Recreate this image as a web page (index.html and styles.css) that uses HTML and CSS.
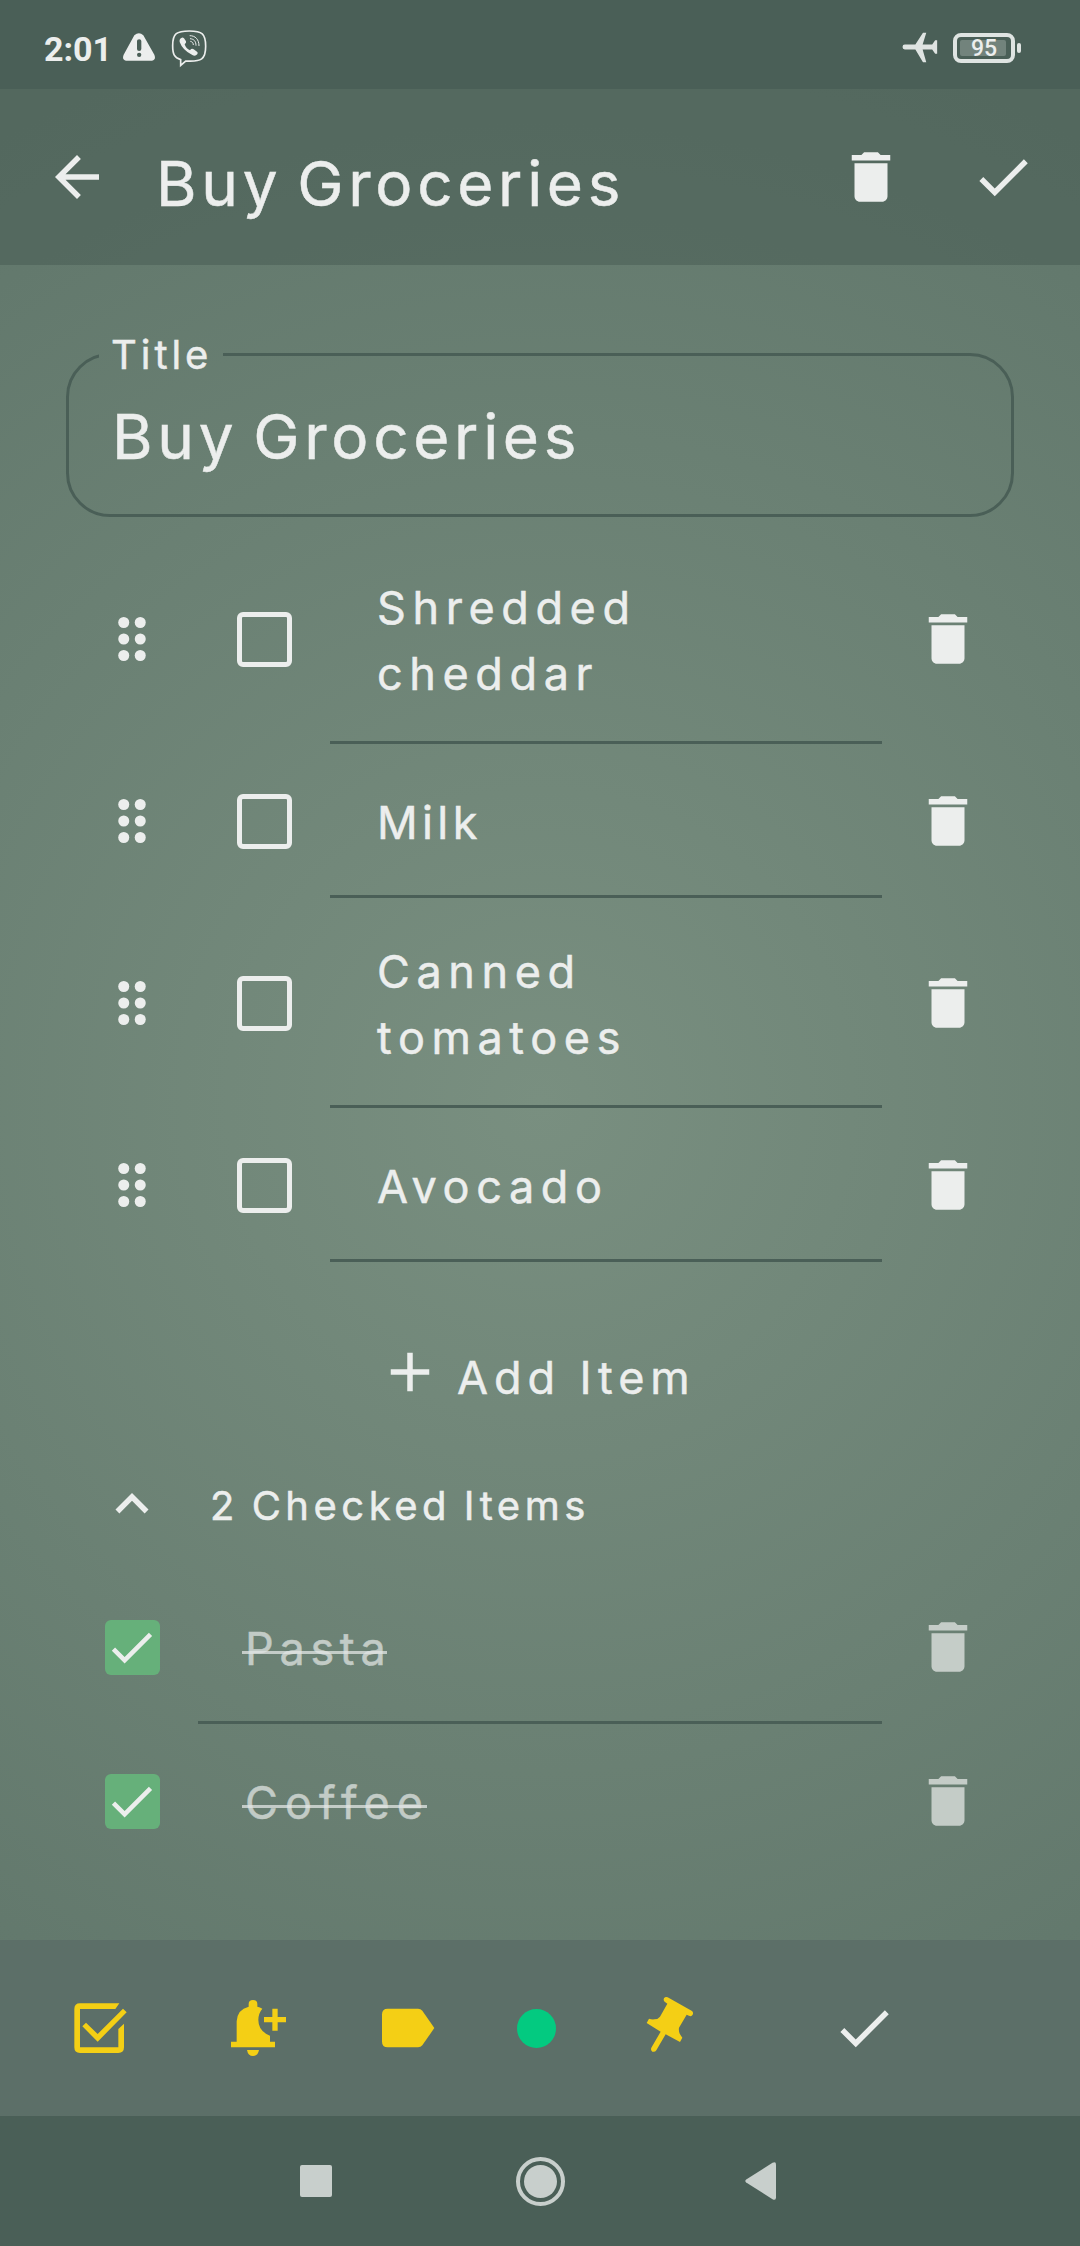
FILE: index.html
```html
<!DOCTYPE html>
<html lang="en">
<head>
<meta charset="utf-8">
<title>Buy Groceries</title>
<link rel="stylesheet" href="styles.css">
</head>
<body>
<svg class="sprite" width="0" height="0" aria-hidden="true">
  <symbol id="trash" viewBox="0 0 24 24"><path d="M6 19c0 1.1.9 2 2 2h8c1.1 0 2-.9 2-2V7H6v12zM19 4h-3.5l-1-1h-5l-1 1H5v2h14V4z"/></symbol>
  <symbol id="check" viewBox="0 0 24 24"><path d="M9 16.17L4.83 12l-1.42 1.41L9 19 21 7l-1.41-1.41z"/></symbol>
  <symbol id="grip" viewBox="0 0 24 24"><circle cx="9" cy="6" r="2"/><circle cx="15" cy="6" r="2"/><circle cx="9" cy="12" r="2"/><circle cx="15" cy="12" r="2"/><circle cx="9" cy="18" r="2"/><circle cx="15" cy="18" r="2"/></symbol>
</svg>
<div class="screen">
  <header class="status">
    <span class="clock">2:01</span>
    <svg class="warn" viewBox="369 97 99 90"><path fill-rule="evenodd" d="M403 104Q417 92 430 104L463 162Q469 177 456 180H378Q365 177 371 162ZM411 121V145Q411 151 417.500 151Q424 151 424 145V121Q424 116 417.500 116Q411 116 411 121ZM417.500 156A6.500 6.500 0 1 0 417.500 169A6.500 6.500 0 1 0 417.500 156Z"/></svg>
    <svg class="viber" viewBox="510 80 114 120"><path class="line" d="M568 89C530 89 518 96 518 133C518 158 523 169 542 175V192L557 179C605 182 617 174 617 135C617 97 606 89 568 89Z"/><path d="M540 113Q547 105 552 111L558 120Q560 124 554 129Q558 142 570 147Q575 140 581 144L591 151Q596 155 589 161Q584 165 577 161Q548 147 539 122Q538 117 540 113Z"/><path class="thin" d="M569 103C586 103 597 114 597 134M570 112C582 113 588 120 588 133M571 120C577 121 580 125 580 131"/></svg>
    <span class="spacer"></span>
    <svg class="plane" viewBox="545 94 108 94"><path d="M553 132H585L608 96H618L607 132H636L645 119H651V160H645L636 147H607L618 186H608L585 147H553Q546 147 546 139.500Q546 132 553 132Z"/></svg>
    <span class="battery"><span class="level">95</span></span><span class="nub"></span>
  </header>

  <div class="appbar">
    <svg class="icon" viewBox="0 0 24 24"><path d="M20 11H7.830l5.590-5.590L12 4l-8 8 8 8 1.410-1.410L7.830 13H20v-2z"/></svg>
    <h1>Buy Groceries</h1>
    <svg class="icon"><use href="#trash"/></svg>
    <svg class="icon done"><use href="#check"/></svg>
  </div>

  <main>
    <fieldset class="field">
      <legend>Title</legend>
      <div class="value">Buy Groceries</div>
    </fieldset>

    <div class="list">
      <div class="item">
        <svg class="icon"><use href="#grip"/></svg><span class="box"></span>
        <div class="text"><span class="name">Shredded cheddar</span></div>
        <svg class="icon"><use href="#trash"/></svg>
      </div>
      <div class="item">
        <svg class="icon"><use href="#grip"/></svg><span class="box"></span>
        <div class="text"><span class="name narrow">Milk</span></div>
        <svg class="icon"><use href="#trash"/></svg>
      </div>
      <div class="item">
        <svg class="icon"><use href="#grip"/></svg><span class="box"></span>
        <div class="text"><span class="name">Canned tomatoes</span></div>
        <svg class="icon"><use href="#trash"/></svg>
      </div>
      <div class="item">
        <svg class="icon"><use href="#grip"/></svg><span class="box"></span>
        <div class="text"><span class="name">Avocado</span></div>
        <svg class="icon"><use href="#trash"/></svg>
      </div>
    </div>

    <div class="add">
      <svg class="icon" viewBox="0 0 24 24"><path d="M19 13h-6v6h-2v-6H5v-2h6V5h2v6h6v2z"/></svg>
      <span>Add Item</span>
    </div>

    <div class="summary">
      <svg class="icon" viewBox="0 0 24 24"><path d="M12 8l-6 6 1.410 1.410L12 10.830l4.590 4.580L18 14z"/></svg>
      <span>2 Checked Items</span>
    </div>

    <div class="list">
      <div class="item checked">
        <span class="box on"><svg><use href="#check"/></svg></span>
        <div class="text"><span class="name">Pasta</span></div>
        <svg class="icon"><use href="#trash"/></svg>
      </div>
      <div class="item checked">
        <span class="box on"><svg><use href="#check"/></svg></span>
        <div class="text"><span class="name wide">Coffee</span></div>
        <svg class="icon"><use href="#trash"/></svg>
      </div>
    </div>
  </main>

  <div class="toolbar">
    <svg class="icon" viewBox="78 195 198 198"><path d="M238 220H120Q103 220 103 237V352Q103 369 120 369H235Q252 369 252 352V281L235 297V352H120V237H226ZM127 289L138 278L173 312L249 236L260 247L173 335Z"/></svg>
    <svg class="icon bell" viewBox="555 195 198 198"><path d="M626 230V222Q626 210 639 210Q652 210 652 222V230Q660 231 667 236Q655 250 655 270Q655 304 690 317V335H705V352H573V335H590V274Q592 238 626 230ZM621 360H657Q654 378 639 378Q624 378 621 360ZM697 236H713V261H738V277H713V302H697V277H672V261H697Z"/></svg>
    <svg class="icon tag" viewBox="1005 195 198 198"><path d="M1043 236H1134Q1142 236 1147 242L1183 294L1147 346Q1142 352 1134 352H1043Q1026 352 1026 335V253Q1026 236 1043 236Z"/></svg>
    <span class="dot"></span>
    <svg class="icon pin" viewBox="531 195 198 198"><path d="M623 202L696 243Q701 247 698 254Q694 261 687 257L680 254L657 293Q655 306 662 316L667 323L660 336L617 313L589 361Q585 367 577 365Q571 361 574 353L602 305L560 279L567 266Q575 269 583 268Q594 268 600 260L622 221L615 216Q609 211 612 205Q616 199 623 202Z"/></svg>
    <svg class="icon accept"><use href="#check"/></svg>
  </div>

  <nav class="nav">
    <span class="recent"></span>
    <span class="home"></span>
    <svg class="back" viewBox="0 0 31 38"><path d="M27.500 .8Q31 -.8 31 2.500V35.500Q31 38.800 27.500 37.200L1.200 20.600Q-.6 19 1.200 17.400Z"/></svg>
  </nav>
</div>
</body>
</html>
```
FILE: styles.css
```css
* { box-sizing: border-box; }
body { margin: 0; font-family: Inter, "Open Sans", sans-serif; color: #eceeed; }
.sprite { position: absolute; }
svg { display: block; fill: currentColor; flex: none; }
.icon { width: 66px; height: 66px; }

.screen {
  width: 1080px; height: 2246px; overflow: hidden;
  display: flex; flex-direction: column;
  background: radial-gradient(circle at 540px 1102px, #798f80 0, #63796d 980px, #5f7569 1230px);
}

.status { height: 89px; padding: 6px 59px 0 44px; display: flex; align-items: center; background: #4a5f57; }
.clock { font: 700 34px/40px Roboto, sans-serif; width: 79px; margin-top: 2px; }
.warn { width: 33px; height: 30px; }
.viber { width: 38px; height: 40px; margin-left: 14px; }
.viber .line { fill: none; stroke: currentColor; stroke-width: 5; }
.viber .thin { fill: none; stroke: currentColor; stroke-width: 3; }
.spacer { flex: 1; }
.plane { width: 36px; height: 31px; margin-right: 15px; color: #dfe4e2; }
.battery { width: 62px; height: 30px; border: 4px solid #dfe4e2; border-radius: 8px; padding: 3px; }
.level { display: block; width: 46px; height: 16px; border-radius: 2px; background: #72837c; font: 500 23px/17px Roboto, sans-serif; text-align: center; padding-left: 2px; }
.nub { width: 4px; height: 10px; margin-left: 2px; border-radius: 2px; background: #dfe4e2; }

.appbar { height: 176px; padding: 0 44px; display: flex; align-items: center; background: rgba(70, 90, 82, .5); }
h1, .value, legend, .name, .add span, .summary span { -webkit-text-stroke: .5px currentColor; }
h1, .value { font-size: 62px; line-height: 76px; font-weight: 400; letter-spacing: 4.7px; word-spacing: -7px; white-space: nowrap; }
h1 { flex: 1; margin: 0 0 0 46px; padding-top: 13px; }
.done { margin-left: 66px; }

main { height: 1675px; padding: 69px 66px 0; overflow: hidden; }
.field { width: 948px; height: 183px; margin: 0 0 17px; min-width: 0; padding: 24px 43px 0; border: 3px solid #4a5f57; border-radius: 44px; }
legend { margin-left: -13px; padding: 0 11px 0 12px; font-size: 40px; line-height: 41px; letter-spacing: 3.95px; }

.item { display: grid; grid-template-columns: 132px 132px 552px 132px; align-items: center; justify-items: center; }
.item.checked { grid-template-columns: 132px 684px 132px; }
.box { width: 55px; height: 55px; border: 5px solid #eceeed; border-radius: 6px; }
.box.on { border: 0; background: #66b07a; }
.box.on svg { width: 55px; height: 55px; margin-left: -1px; }
.text { justify-self: stretch; min-height: 154px; padding: 40.5px 44px 34.5px 47px; display: flex; align-items: center; border-bottom: 3px solid #4a5f57; }
.name { font-size: 45px; line-height: 66px; letter-spacing: 6.6px; }
.narrow { letter-spacing: 4.4px; }
.checked .text { padding-left: 44px; }
.checked:last-child .text { border-color: transparent; }
.checked .icon { color: rgba(236, 238, 237, .7); }
.checked .name { position: relative; padding-left: 3px; letter-spacing: 5.7px; color: #c2cbc6; }
.checked .wide { letter-spacing: 7.1px; }
.checked .name::after { content: ""; position: absolute; left: 0; right: 4px; top: 35px; height: 3px; background: rgba(225, 230, 228, .75); }
.checked .wide::after { right: 3px; }

.add { height: 176px; padding: 44px 0 0 311px; display: flex; align-items: center; }
.add span { padding: 11px 0 0 14px; font-size: 45px; line-height: 66px; letter-spacing: 5.9px; }
.summary { height: 132px; padding-left: 33px; display: flex; align-items: center; }
.summary span { padding: 3px 0 0 45px; font-size: 40px; line-height: 60px; letter-spacing: 4.5px; word-spacing: -3px; }

.toolbar { height: 176px; padding-left: 66px; display: flex; align-items: center; background: #5c6f68; color: #f4cf15; }
.bell { margin-left: 93px; }
.tag { margin-left: 84px; }
.dot { width: 39px; height: 39px; margin: 1px 0 0 76px; border-radius: 50%; background: #03ca80; }
.pin { margin-left: 81px; }
.accept { margin-left: 128px; color: #eceeed; }

.nav { height: 130px; padding-left: 300px; display: flex; align-items: center; background: #4a5f57; color: #c8cfcc; }
.recent { width: 32px; height: 32px; border-radius: 2px; background: currentColor; }
.home { width: 49px; height: 49px; margin-left: 184px; border: 4px solid currentColor; border-radius: 50%; padding: 4px; background: currentColor content-box; }
.back { width: 31px; height: 38px; margin-left: 180px; }
```
